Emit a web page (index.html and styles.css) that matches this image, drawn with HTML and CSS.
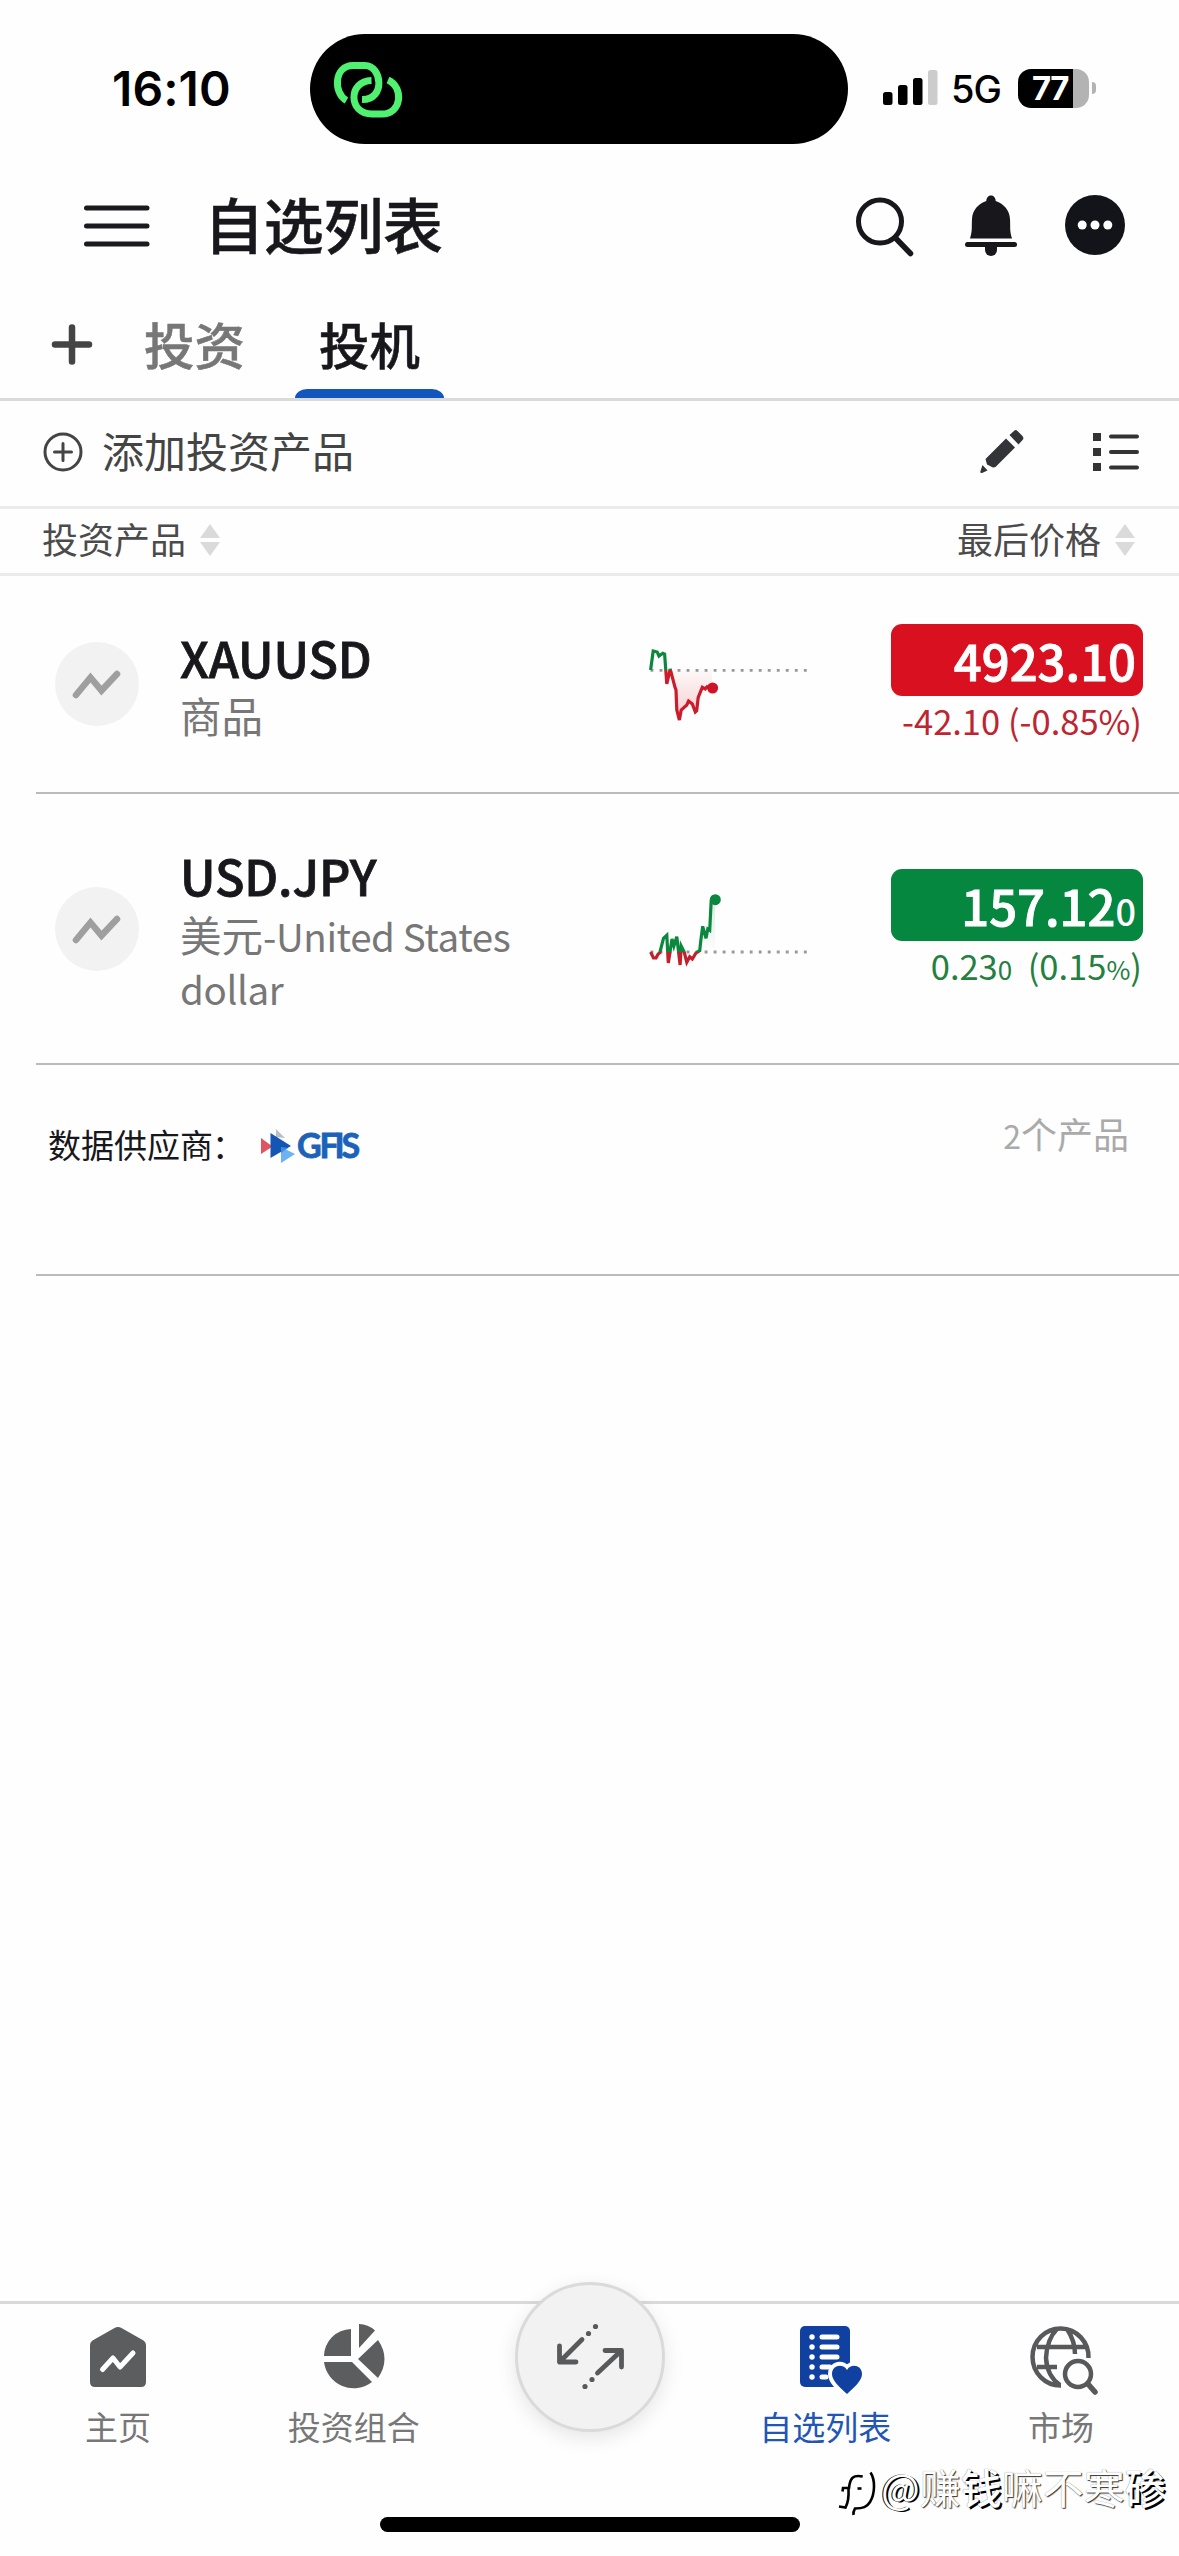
FILE: index.html
```html
<!DOCTYPE html>
<html lang="zh-CN">
<head>
<meta charset="utf-8">
<title>自选列表</title>
<link rel="stylesheet" href="styles.css">
</head>
<body>
<div class="app">
  <header class="status">
    <span class="time">16:10</span>
    <div class="island">
      <svg class="link-icon" width="72" height="58" viewBox="0 0 72 58">
        <g fill="none" stroke="#50f070" stroke-width="7">
          <path d="M14.500 40.500C1 33 2 5.500 21 5.500H33C50 5.500 54 40 30 39.500"/>
          <path d="M56 20C72 27 70 54 50 54H40C16 54 16 21 39.500 20.500"/>
        </g>
      </svg>
    </div>
    <div class="signals">
      <svg width="55" height="36" viewBox="0 0 55 36">
        <rect x="0" y="22" width="9.500" height="13" rx="2.500"/>
        <rect x="15" y="15" width="9.500" height="20" rx="2.500"/>
        <rect x="30" y="8" width="9.500" height="27" rx="2.500"/>
        <rect x="45" y="0" width="9.500" height="35" rx="2.500" fill="#ccc"/>
      </svg>
      <span class="net">5G</span>
      <span class="battery">77</span>
      <span class="nub"></span>
    </div>
  </header>

  <div class="titlebar">
    <svg class="menu" width="66" height="42" viewBox="0 0 66 42"><path d="M2.500 3H63M2.500 21H63M2.500 39H63" stroke="#1b1b1f" stroke-width="5" stroke-linecap="round"/></svg>
    <h1>自选列表</h1>
    <div class="actions">
      <svg width="60" height="62" viewBox="0 0 60 62" fill="none" stroke="#17171c"><circle cx="26" cy="26.500" r="21.500" stroke-width="5"/><path d="M42 43.500L56.500 58.500" stroke-width="5.500" stroke-linecap="round"/></svg>
      <svg width="52" height="62" viewBox="0 0 52 62" fill="#17171c"><path d="M5 43.500C7.500 35 6.500 34 7 24C7.500 15 13 9 21.300 6C21.300-1.500 30.700-1.500 30.700 6C39 9 44.500 15 45 24C45.500 34 44.500 35 47 43.500Z"/><rect x="0" y="47" width="52" height="5" rx="2.500"/><path d="M20 51H32V55A6 6 0 0 1 20 55Z"/></svg>
      <svg width="60" height="60" viewBox="0 0 60 60"><circle cx="30" cy="29" r="30" fill="#13131a"/><g fill="#fff"><circle cx="17.200" cy="29" r="4.500"/><circle cx="30" cy="29" r="4.500"/><circle cx="42.800" cy="29" r="4.500"/></g></svg>
    </div>
  </div>

  <nav class="tabs">
    <svg class="plus" width="42" height="42" viewBox="0 0 42 42"><path d="M21 4.500V38.500M4 21.500H38" stroke="#444" stroke-width="6.500" stroke-linecap="round"/></svg>
    <span class="tab">投资</span>
    <span class="tab active">投机</span>
  </nav>

  <div class="toolbar">
    <svg width="40" height="40" viewBox="0 0 40 40" fill="none" stroke="#444"><circle cx="20" cy="20" r="18" stroke-width="3"/><path d="M20 11.500V28.500M11.500 20H28.500" stroke-width="3" stroke-linecap="round"/></svg>
    <span class="add">添加投资产品</span>
    <svg class="pencil" width="46" height="46" viewBox="0 0 46 46" fill="#333438"><path d="M30.500 6L35.500 1.500Q37 .5 38.500 2L43.500 7Q45 9 44 10.500L39.500 15.500ZM27 9.500L36 18.500L16.500 38Q14 39 12 37.500L8 35.500L6.500 30ZM3.500 36L8.500 41.500L3 44Q1 44.500 1.500 42Z"/></svg>
    <svg width="46" height="40" viewBox="0 0 46 40"><path d="M0 1H8V9H0ZM0 16H8V24H0ZM0 31H8V39H0Z" fill="#333"/><path d="M18 4.500H44M18 20H44M18 35.500H44" stroke="#333" stroke-width="4" stroke-linecap="round"/></svg>
  </div>

  <div class="columns">
    <span class="col">投资产品<svg width="20" height="32" viewBox="0 0 20 32" fill="#dadada"><path d="M10 0L20 14H0ZM0 18H20L10 32Z"/></svg></span>
    <span class="col">最后价格<svg width="20" height="32" viewBox="0 0 20 32" fill="#dadada"><path d="M10 0L20 14H0ZM0 18H20L10 32Z"/></svg></span>
  </div>

  <main>
    <section class="row gold">
      <span class="avatar"><svg width="50" height="28" viewBox="0 0 50 28" fill="none" stroke="#9f9f9f" stroke-width="6.500" stroke-linecap="round"><path d="M4 25L18.500 7.500L29.500 20.500L45 4"/></svg></span>
      <div class="names"><strong>XAUUSD</strong><p>商品</p></div>
      <svg class="spark" width="180" height="110" viewBox="0 0 180 110">
        <defs>
          <clipPath id="gUp"><rect width="180" height="50"/></clipPath>
          <clipPath id="gDn"><rect y="50" width="180" height="60"/></clipPath>
          <linearGradient id="gFill" x1="0" y1="0" x2="0" y2="1"><stop offset="0" stop-color="#d9101f" stop-opacity=".02"/><stop offset="1" stop-color="#d9101f" stop-opacity=".22"/></linearGradient>
          <path id="gLine" d="M10.600 50L13.200 31L17.200 32L19 36L22.800 33.300L24.600 34L26.800 64L30.200 49L35 67.300L36 70L36.800 90L39.400 100L41.200 90L46.800 85L48.600 81L52.300 84L55.300 92L56.700 90.700L58.200 77.300L62.300 67.300L65.200 69L67 66.700L72 68"/>
        </defs>
        <path d="M10.500 50.300H168" stroke="#999" stroke-width="2.800" stroke-dasharray="2.900 6.120"/>
        <path d="M30.200 50L35 67L36.800 90L39.400 100L41.200 90L48.600 81L55.300 92L58.200 77L62.300 67L72 68V50Z" fill="url(#gFill)"/>
        <g fill="none" stroke-width="3.200">
          <use href="#gLine" stroke="#0b873e" clip-path="url(#gUp)"/>
          <use href="#gLine" stroke="#cc1b2b" clip-path="url(#gDn)"/>
        </g>
        <circle cx="72.600" cy="68" r="5.500" fill="#cf1427"/>
      </svg>
      <div class="quote down"><span class="price">4923.10</span><span class="change">-42.10 (-0.85%)</span></div>
    </section>

    <section class="row yen">
      <span class="avatar"><svg width="50" height="28" viewBox="0 0 50 28" fill="none" stroke="#9f9f9f" stroke-width="6.500" stroke-linecap="round"><path d="M4 25L18.500 7.500L29.500 20.500L45 4"/></svg></span>
      <div class="names"><strong>USD.JPY</strong><p>美元<span class="latin">-United States dollar</span></p></div>
      <svg class="spark" width="180" height="110" viewBox="0 0 180 110">
        <defs>
          <clipPath id="yUp"><rect width="180" height="83"/></clipPath>
          <clipPath id="yDn"><rect y="83" width="180" height="27"/></clipPath>
          <linearGradient id="yFill" x1="0" y1="0" x2="0" y2="1"><stop offset="0" stop-color="#0b873e" stop-opacity=".15"/><stop offset="1" stop-color="#0b873e" stop-opacity="0"/></linearGradient>
          <path id="yLine" d="M10.600 83L13.500 89L16 89L18 85.300L19.800 83.700L23.500 69.300L26.800 66.300L28.300 94L32 70L33.900 77L36.800 67.700L40.100 96L41.200 77L44.200 83L46.800 93.300L49.700 87.700L52.300 90L56 84L59.700 81.700L60.800 71.700L62.700 57.300L66 69.300L67.800 60L69.700 61.300L71.200 31.700L73.700 27"/>
        </defs>
        <path d="M10.500 83H168" stroke="#999" stroke-width="2.800" stroke-dasharray="2.900 6.120"/>
        <path d="M59.700 83L62.700 57L66 69L69.700 61L71.200 31H75V83Z" fill="url(#yFill)"/>
        <g fill="none" stroke-width="3.200">
          <use href="#yLine" stroke="#0b873e" clip-path="url(#yUp)"/>
          <use href="#yLine" stroke="#c41f2d" clip-path="url(#yDn)"/>
        </g>
        <circle cx="75.300" cy="30.700" r="5.500" fill="#0b873e"/>
      </svg>
      <div class="quote up"><span class="price">157.12<small>0</small></span><span class="change">0.23<small>0</small>&nbsp; (0.15<small>%</small>)</span></div>
    </section>

    <section class="provider">
      <span class="source">数据供应商<span class="colon">：</span></span>
      <svg class="gfis" width="100" height="40" viewBox="0 0 100 40">
        <path d="M15 2L24 11L15 10Z" fill="#b9bdc4"/>
        <path d="M0 11L11.500 19.500L0 27Z" fill="#df5560"/>
        <path d="M9.500 6L30 19L9.500 31Z" fill="#1356b4"/>
        <path d="M20 20L34 27L20 36Z" fill="#6db2f4"/>
        <path d="M20 20L27 21L20 26Z" fill="#3f8be0"/>
        <text x="36 58.500 73.500 80.500" y="31" class="gfis-text">GFIS</text>
      </svg>
      <span class="count"><span class="num">2</span>个产品</span>
    </section>
  </main>

  <footer class="bottom">
    <div class="item">
      <svg width="70" height="72" viewBox="0 0 70 72"><path d="M7 21Q7 18 9.500 16.500L31.500 4Q35 2 38.500 4L60.500 16.500Q63 18 63 21V58Q63 63 58 63H12Q7 63 7 58Z" fill="#5c5d5f"/><path d="M19.500 45.500L30 34L37 43L50 29" fill="none" stroke="#fff" stroke-width="5" stroke-linecap="round" stroke-linejoin="round"/></svg>
      <span>主页</span>
    </div>
    <div class="item">
      <svg width="70" height="72" viewBox="0 0 70 72" fill="#5c5d5f"><path d="M32 5V32H5A28 27 0 0 1 32 5ZM40 0Q49 0 56 6.500L40 24ZM59 16Q72 35 59 54L39 35ZM5 38H33L53 58A30 30 0 0 1 5 38Z"/></svg>
      <span>投资组合</span>
    </div>
    <div class="item fab-slot">
      <span class="fab"><svg width="80" height="80" viewBox="0 0 80 80" fill="none" stroke="#58595b" stroke-width="4.800" stroke-linecap="round" stroke-linejoin="round"><path d="M9.500 29V45H26M9.500 45L32 22.500M55 33.500H71.500V50M71.500 33.500L47.500 56"/><g fill="#58595b" stroke="none"><circle cx="38.500" cy="16.500" r="2.600"/><circle cx="45.500" cy="9.500" r="2.600"/><circle cx="42" cy="62.500" r="2.600"/><circle cx="35" cy="69.500" r="2.600"/></g></svg></span>
    </div>
    <div class="item active">
      <svg width="70" height="72" viewBox="0 0 70 72"><rect x="10" y="2" width="50" height="61" rx="5" fill="#1141a0"/><path d="M32 13H47M32 23H47M32 33H47M32 43H40M32 53H36" stroke="#fff" stroke-width="5" stroke-linecap="round"/><g fill="#fff"><circle cx="22" cy="13" r="2.700"/><circle cx="22" cy="23" r="2.700"/><circle cx="22" cy="33" r="2.700"/><circle cx="22" cy="43" r="2.700"/><circle cx="22" cy="53" r="2.700"/></g><path d="M57 70C48 62 42 56 42 50C42 41 53 39 57 46C61 39 72 41 72 50C72 56 66 62 57 70Z" fill="#1141a0" stroke="#fff" stroke-width="8" paint-order="stroke"/></svg>
      <span>自选列表</span>
    </div>
    <div class="item">
      <svg width="70" height="72" viewBox="0 0 70 72" fill="none" stroke="#58595b" stroke-width="4.500"><path d="M35 61.500A28 28.500 0 1 1 62.500 34M11 23H60M11 43H31M31 5Q21 15 20 34Q21 52 34 61M41 5Q49 17 49 30"/><circle cx="52" cy="50" r="13"/><path d="M62 60L69 68" stroke-width="5.500" stroke-linecap="round"/></svg>
      <span>市场</span>
    </div>
  </footer>
  <div class="home-indicator"></div>
  <div class="watermark"><svg width="42" height="44" viewBox="0 0 42 44" fill="none" stroke="#000" stroke-width="2.600"><path d="M23.700 12.500C14 10.500 11 14 10 24H4L3.500 27.500M9.500 25C10 34 9 39 6.500 43.500L0 42.500M31.500 8.500C36.500 16 36 30 31 38C28 43 24 44.500 16 44.500Q14 48 14.500 51"/><path d="M18.500 24.500H22.500"/></svg><span><i>@</i>赚<b>钱</b>嘛不寒<b>碜</b></span></div>
</div>
</body>
</html>
```
FILE: styles.css
```css
* { box-sizing: border-box; margin: 0; padding: 0; }
body {
  width: 1179px;
  background: #fefefe;
  color: #17171c;
  font-family: "Noto Sans CJK SC", sans-serif;
}
svg { display: block; flex: none; overflow: visible; }
.app {
  position: relative;
  display: flex;
  flex-direction: column;
  width: 1179px;
  height: 2556px;
  overflow: hidden;
}

.status { display: flex; height: 168px; padding-top: 34px; color: #000; flex: none; }
.time {
  width: 310px; padding-left: 112px; height: 110px;
  font: 600 48px/109px Inter, sans-serif; letter-spacing: .1px;
}
.island { width: 538px; height: 110px; border-radius: 55px; background: #000; padding: 26px 0 0 22px; }
.signals { display: flex; padding-left: 35px; height: 108px; align-items: center; }
.net { width: 66px; padding-left: 13px; font: 500 38px/50px Inter, sans-serif; letter-spacing: -1px; margin-right: 14px; padding-top: 1px; }
.battery {
  width: 71px; height: 39px; border-radius: 13px;
  background: linear-gradient(90deg, #000 55px, #b3b3b3 55px);
  color: #fff; font: 700 33px/39px Inter, sans-serif; letter-spacing: -1.500px; padding-left: 14px;
}
.nub { width: 4px; height: 12px; margin-left: 3px; border-radius: 0 5px 5px 0; background: #b3b3b3; }

.titlebar { display: flex; height: 116px; padding: 0 54px 0 84px; align-items: center; flex: none; }
.titlebar h1 {
  margin-left: 54px; padding-bottom: 6px;
  font-size: 60px; line-height: 80px; font-weight: 500; letter-spacing: -.3px;
  -webkit-text-stroke: .5px currentColor;
}
.actions { display: flex; align-items: center; margin-left: auto; }
.actions svg:nth-child(1) { margin-right: 51px; }
.actions svg:nth-child(2) { margin-right: 48px; }

.tabs { display: flex; height: 117px; border-bottom: 3px solid #dadada; padding-left: 51px; flex: none; }
.plus { margin-top: 39px; }
.tab {
  width: 149px; margin-left: 27px; height: 114px;
  font-size: 50.500px; line-height: 118px; font-weight: 500; color: #777;
  text-align: center; -webkit-text-stroke: .5px currentColor;
}
.tab.active { display: flex; flex-direction: column; color: #17171c; margin-left: 26px; line-height: 118px; }
.tab.active::after {
  content: ""; height: 9px; margin-top: -13px;
  border-radius: 12px 12px 0 0 / 9px 9px 0 0; background: #1256bd; flex: none;
}
.toolbar { display: flex; align-items: center; height: 108px; padding: 0 40px 4px 43px; border-bottom: 3px solid #ebebeb; flex: none; }
.add { margin: -3px 0 0 19px; font-size: 42px; line-height: 60px; color: #444; }
.pencil { margin: 0 68px 0 auto; }
.columns { display: flex; justify-content: space-between; align-items: center; height: 67px; padding: 0 44px 7px 42px; border-bottom: 3px solid #ebebeb; flex: none; }
.col { display: flex; align-items: center; gap: 14px; font-size: 36px; line-height: 50px; color: #4b4b4b; }
.col svg { margin-top: 4px; }

.row { display: flex; align-items: flex-start; margin-left: 36px; border-bottom: 2px solid #bbb; }
.gold { height: 218px; }
.yen { height: 271px; }
.avatar {
  display: flex; align-items: center; justify-content: center;
  width: 84px; height: 84px; border-radius: 50%; background: #f2f2f2; margin: 66px 0 0 19px;
}
.yen .avatar { margin-top: 93px; }
.names { width: 360px; margin: 50px 0 0 41px; }
.names strong {
  display: block; font-size: 48.500px; line-height: 62px; font-weight: 500; letter-spacing: -.1px;
  -webkit-text-stroke: .8px currentColor;
}
.names p { margin-top: 1px; font-size: 41.500px; line-height: 52px; color: #777; }
.yen .names p { margin-top: 2px; }
.latin { font-size: 38.500px; letter-spacing: -.4px; }
.spark { margin: 44px 0 0 100px; }
.yen .spark { margin-top: 75px; }
.quote { display: flex; flex-direction: column; width: 252px; margin: 48px 0 0 71px; }
.yen .quote { margin-top: 75px; }
.price {
  height: 72px; border-radius: 11px; color: #fff; padding-right: 7px; text-align: right;
  font-size: 49px; line-height: 72px; font-weight: 500; -webkit-text-stroke: .9px currentColor;
}
.price small { font-size: 36px; -webkit-text-stroke: 0; }
.down .price { background: #d9101f; }
.up .price { background: #05873f; }
.change { text-align: right; font-size: 34.500px; line-height: 48px; padding-right: 1px; white-space: nowrap; }
.change small { font-size: 26px; }
.down .change { color: #bd2530; }
.up .change { color: #23803f; }

.provider { display: flex; margin-left: 36px; height: 211px; border-bottom: 2px solid #bbb; padding: 0 50px 0 12px; }
.source { width: 213px; margin-top: 54px; font-size: 33px; line-height: 50px; white-space: nowrap; }
.colon { margin-left: -1px; }
.gfis { margin-top: 62px; }
.gfis-text { font: 700 34px Lato, sans-serif; fill: #1c62b8; stroke: #1c62b8; stroke-width: .8px; }
.count { margin: 43px 0 0 auto; font-size: 36px; line-height: 50px; color: #aaa; }
.num { font-size: 32px; }

.bottom { display: flex; margin-top: auto; height: 216px; border-top: 3px solid #dadada; flex: none; }
.item { flex: 1; display: flex; flex-direction: column; align-items: center; padding-top: 20px; font-size: 33px; color: #777; }
.item span { line-height: 44px; margin-top: 8px; }
.item.active { color: #2255b5; }
.fab-slot { padding: 0; }
.item .fab {
  display: flex; align-items: center; justify-content: center;
  width: 150px; height: 150px; margin-top: -22px; margin-left: 1px; flex: none;
  border: 3px solid #dadada; border-radius: 50%; background: #f2f2f2;
  box-shadow: 0 6px 20px rgba(0, 0, 0, .1);
}
.home-indicator { width: 420px; height: 15px; margin: 0 auto 24px; border-radius: 8px; background: #000; flex: none; }
.watermark {
  position: absolute; left: 839px; top: 2456px; display: flex; align-items: center;
  color: #fff; font-size: 41px; line-height: 60px; white-space: nowrap;
  text-shadow: 1px 1px 1px #333, 0 0 1px #999;
}
.watermark i, .watermark b { font-style: normal; text-shadow: -1px 0 0 #000, 2px 1px 0 #000; }
.watermark b { font-weight: 500; text-shadow: 2px 2px 0 #000, 0 0 1px #666; }
```
